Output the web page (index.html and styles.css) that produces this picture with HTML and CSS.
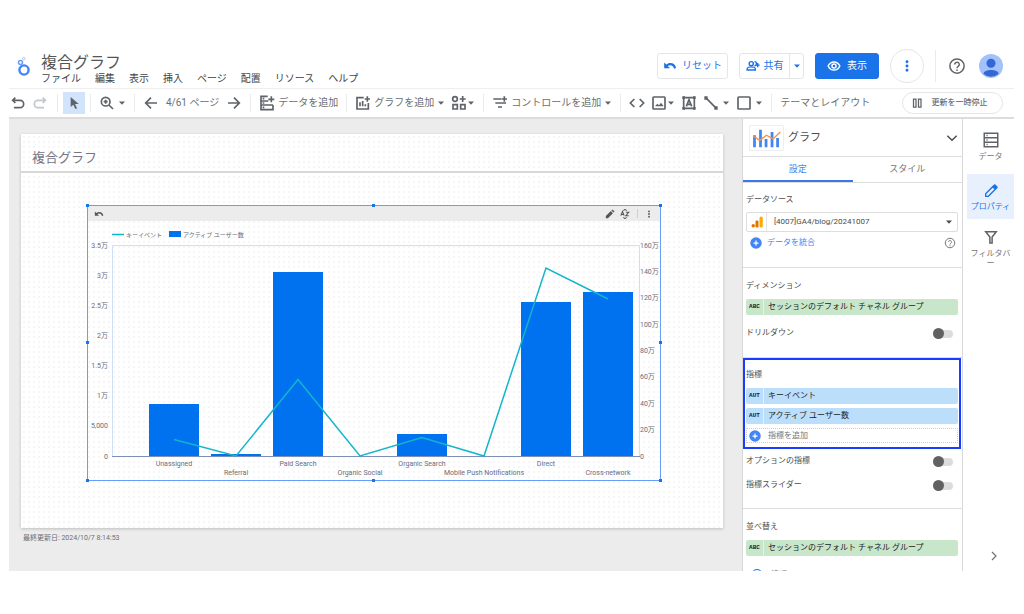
FILE: index.html
```html
<!DOCTYPE html>
<html lang="ja">
<head>
<meta charset="utf-8">
<title>複合グラフ</title>
<link rel="stylesheet" href="styles.css">
</head>
<body>
<svg class="defs" aria-hidden="true">
  <symbol id="undo" viewBox="0 0 24 24"><path d="M8 4 4 8l4 4M4 8h11a5 5 0 0 1 0 11H6"/></symbol>
  <symbol id="caret" viewBox="0 0 8 8"><path class="solid" d="M1 2.500h6L4 5.800z"/></symbol>
  <symbol id="back" viewBox="0 0 24 24"><path class="solid" d="M12.500 7c-2.600 0-5 1-6.900 2.600L2 6v10h10l-3.900-3.900A7 7 0 0 1 19.100 16.500l3.300-1.100A10.500 10.500 0 0 0 12.500 7z"/></symbol>
  <symbol id="help" viewBox="0 0 24 24"><circle cx="12" cy="12" r="9.500"/><path d="M9 10a3 3 0 1 1 4.800 2.300C12.600 13.200 12 13.700 12 15M12 16.500v2"/></symbol>
  <symbol id="dots" viewBox="0 0 24 24"><path class="solid" d="M12 3.500a2.200 2.200 0 1 0 0 4.400 2.200 2.200 0 0 0 0-4.400zm0 6.300a2.200 2.200 0 1 0 0 4.400 2.200 2.200 0 0 0 0-4.400zm0 6.300a2.200 2.200 0 1 0 0 4.400 2.200 2.200 0 0 0 0-4.400z"/></symbol>
  <symbol id="plus" viewBox="0 0 24 24"><circle class="solid" cx="12" cy="12" r="11.500"/><path class="cross" d="M12 7v10M7 12h10"/></symbol>
</svg>
<div class="app">
  <header class="header">
    <svg class="logo" viewBox="0 0 14 20"><circle cx="8" cy="14" r="4.600" fill="none" stroke="#4285f4" stroke-width="2.400"/><circle cx="4.500" cy="6.500" r="2" fill="none" stroke="#669df6" stroke-width="1.500"/><circle cx="7.800" cy="2.600" r="1.300" fill="none" stroke="#aecbfa" stroke-width="1"/></svg>
    <div class="titles">
      <h1 class="doc-title">複合グラフ</h1>
      <nav class="menu">
        <button>ファイル</button><button>編集</button><button>表示</button><button>挿入</button><button>ページ</button><button>配置</button><button>リソース</button><button>ヘルプ</button>
      </nav>
    </div>
    <div class="actions">
      <button class="outlined"><svg class="icon i14"><use href="#back"/></svg>リセット</button>
      <div class="split">
        <button class="split-main"><svg class="icon i14" viewBox="0 0 24 24"><circle cx="9" cy="8" r="3.500"/><path d="M2 19v-2c0-2 4-3.500 7-3.500s7 1.500 7 3.500v2zM14.500 4.500a3.500 3.500 0 0 1 0 7M20 7v7M16.500 10.500h7"/></svg>共有</button>
        <button class="split-caret" aria-label="共有オプション"><svg class="icon i8"><use href="#caret"/></svg></button>
      </div>
      <button class="primary"><svg class="icon i14" viewBox="0 0 24 24"><path d="M2 12c2-4.500 6-7 10-7s8 2.500 10 7c-2 4.500-6 7-10 7s-8-2.500-10-7z"/><circle cx="12" cy="12" r="3.500"/></svg>表示</button>
      <button class="more" aria-label="その他"><svg class="icon i16"><use href="#dots"/></svg></button>
      <span class="divider"></span>
      <button class="plain" aria-label="ヘルプ"><svg class="icon help"><use href="#help"/></svg></button>
      <svg class="avatar" viewBox="0 0 24 24"><circle cx="12" cy="12" r="12" fill="#a1c2fa"/><circle cx="12" cy="9.300" r="4.500" fill="#3367d6"/><path d="M4.500 20c0-3 4-4 7.500-4s7.500 1 7.500 4a12 12 0 0 1-15 0z" fill="#3367d6"/></svg>
    </div>
  </header>

  <div class="toolbar">
    <div class="group first">
      <button class="tool" aria-label="元に戻す"><svg class="icon i16"><use href="#undo"/></svg></button>
      <button class="tool faded" aria-label="やり直す"><svg class="icon i16" viewBox="0 0 24 24"><path d="m16 4 4 4-4 4M20 8H9a5 5 0 0 0 0 11h9"/></svg></button>
    </div>
    <div class="group tight">
      <button class="tool selected" aria-label="選択"><svg class="icon i16" viewBox="0 0 24 24"><path class="solid" d="M7 3v15l4-3.500 3 6.500 2.500-1.200-3-6.300H19z"/></svg></button>
    </div>
    <div class="group">
      <button class="tool" aria-label="ズーム"><svg class="icon i16" viewBox="0 0 24 24"><circle cx="10" cy="10" r="6.500"/><path d="m15 15 6 6M10 7v6M7 10h6"/></svg><svg class="icon i8"><use href="#caret"/></svg></button>
    </div>
    <div class="group pager">
      <button class="tool" aria-label="前のページ"><svg class="icon i16" viewBox="0 0 24 24"><path d="M21 12H4M12 4l-8 8 8 8"/></svg></button>
      <span>4/61 ページ</span>
      <button class="tool" aria-label="次のページ"><svg class="icon i16" viewBox="0 0 24 24"><path d="M3 12h17M12 4l8 8-8 8"/></svg></button>
    </div>
    <div class="group">
      <button class="tool"><svg class="icon i16" viewBox="0 0 24 24"><path d="M13 2H3v20h18v-7M3 9h11M3 15h18M18.500 2v9M14 6.500h9M5.500 5.500H8M5.500 12H8M5.500 18.500H8"/></svg>データを追加</button>
    </div>
    <div class="group">
      <button class="tool"><svg class="icon i16" viewBox="0 0 24 24"><path d="M13 4H3v17h17V12M7.500 17v-6M11.500 17V9M15.500 17v-3M18.500 2v8M14.500 6h8"/></svg>グラフを追加<svg class="icon i8"><use href="#caret"/></svg></button>
      <button class="tool snug" aria-label="コミュニティ ビジュアリゼーション"><svg class="icon i16" viewBox="0 0 24 24"><circle cx="6" cy="6" r="3.500"/><path d="M3 14.500h6.500v6.500H3zM14.500 14.500H21v6.500h-6.500zM17.500 1.500v9M13 6h9"/></svg><svg class="icon i8"><use href="#caret"/></svg></button>
    </div>
    <div class="group">
      <button class="tool"><svg class="icon i16" viewBox="0 0 24 24"><path d="M2 6h12M5 12h16M9 18h6M18.500 2v8M14.500 6h8"/></svg>コントロールを追加<svg class="icon i8"><use href="#caret"/></svg></button>
    </div>
    <div class="group">
      <button class="tool" aria-label="URL の埋め込み"><svg class="icon i16" viewBox="0 0 24 24"><path d="m8 6-6 6 6 6M16 6l6 6-6 6"/></svg></button>
      <button class="tool snug" aria-label="画像"><svg class="icon i16" viewBox="0 0 24 24"><rect x="3" y="3" width="18" height="18" rx="1"/><path class="solid" d="m6 17 3.500-4 2.500 2.500 3-4 4 5.500z"/></svg><svg class="icon i8"><use href="#caret"/></svg></button>
      <button class="tool" aria-label="テキスト"><svg class="icon i16" viewBox="0 0 24 24"><path d="M4 4h16v16H4zM8 17l4-10 4 10M9.500 14h5"/><path class="solid" d="M2 2h4v4H2zM18 2h4v4h-4zM2 18h4v4H2zM18 18h4v4h-4z"/></svg></button>
      <button class="tool" aria-label="線"><svg class="icon i16" viewBox="0 0 24 24"><path d="M4 4l16 16"/><path class="solid" d="M2 2h5v5H2zM17 17h5v5h-5z"/></svg><svg class="icon i8"><use href="#caret"/></svg></button>
      <button class="tool" aria-label="図形"><svg class="icon i16" viewBox="0 0 24 24"><rect x="3" y="3" width="18" height="18" rx="1"/></svg><svg class="icon i8"><use href="#caret"/></svg></button>
    </div>
    <div class="group">
      <button class="tool">テーマとレイアウト</button>
    </div>
    <button class="pause"><svg class="icon i12" viewBox="0 0 24 24"><path d="M3 4h5v16H3zM13 4h5v16h-5z"/></svg>更新を一時停止</button>
  </div>

  <main class="main">
    <section class="canvas">
      <div class="page">
        <h2 class="page-title">複合グラフ</h2>
        <div class="page-body">
          <div class="chart">
            <div class="chart-bar">
              <svg class="icon i10"><use href="#back"/></svg>
              <svg class="icon i10 push" viewBox="0 0 24 24"><path class="solid" d="M2 22v-5L14 5l5 5L7 22zM15.500 3.500 18 1l5 5-2.500 2.500z"/></svg>
              <svg class="icon i10" viewBox="0 0 24 24"><path d="M2 16 6 6l4 10M3.500 13h5M14 8h7l-7 8h7M8 4l4-3 4 3M8 20l4 3 4-3"/></svg>
              <span class="bar-divider"></span>
              <svg class="icon i10"><use href="#dots"/></svg>
            </div>
            <svg class="plot" viewBox="0 0 572 259" role="img" aria-label="キーイベントとアクティブ ユーザー数">
              <path d="M24 13.500h12" class="series"/><text x="38" y="16" class="legend">キーイベント</text>
              <rect x="81" y="10" width="12" height="6" class="bar"/><text x="95" y="16" class="legend">アクティブ ユーザー数</text>
              <path d="M24.500 235V24.500H551.500V235" class="frame"/>
              <g class="bar">
                <rect x="61" y="183" width="50" height="52"/><rect x="123" y="233" width="50" height="2"/><rect x="185" y="51" width="50" height="184"/><rect x="309" y="213" width="50" height="22"/><rect x="433" y="81" width="50" height="154"/><rect x="495" y="71" width="50" height="164"/>
              </g>
              <path d="M24 235.500H552" class="axis"/>
              <polyline class="series" points="86,218.500 148,235 210,158.500 272,235 334,216.500 396,235 458,47 520,78"/>
              <g class="end">
                <text x="20" y="27">3.5万</text><text x="20" y="57">3万</text><text x="20" y="87">2.5万</text><text x="20" y="117">2万</text><text x="20" y="147">1.5万</text><text x="20" y="177">1万</text><text x="20" y="207">5,000</text><text x="20" y="238">0</text>
              </g>
              <g>
                <text x="552" y="27">160万</text><text x="552" y="53">140万</text><text x="552" y="79">120万</text><text x="552" y="106">100万</text><text x="552" y="132">80万</text><text x="552" y="158">60万</text><text x="552" y="185">40万</text><text x="552" y="211">20万</text><text x="552" y="238">0</text>
              </g>
              <g class="mid">
                <text x="86" y="245">Unassigned</text><text x="148" y="254">Referral</text><text x="210" y="245">Paid Search</text><text x="272" y="254">Organic Social</text><text x="334" y="245">Organic Search</text><text x="396" y="254">Mobile Push Notifications</text><text x="458" y="245">Direct</text><text x="520" y="254">Cross-network</text>
              </g>
            </svg>
            <i class="handle t l"></i><i class="handle t c"></i><i class="handle t r"></i><i class="handle m l"></i><i class="handle m r"></i><i class="handle b l"></i><i class="handle b c"></i><i class="handle b r"></i>
          </div>
        </div>
      </div>
      <p class="updated">最終更新日: 2024/10/7 8:14:53</p>
    </section>

    <aside class="panel">
      <div class="panel-head">
        <svg class="chart-type" viewBox="0 0 35 26"><path d="M4.500 23V10M11 23V4M17 23V14M23.500 23V6.500M29.500 23V13" stroke="#4285f4" stroke-width="3" fill="none"/><path d="M3 10.500l7 5 7.500-5.500 7 4 8-7.500" stroke="#f4924a" stroke-width="1.500" fill="none"/></svg>
        <h2>グラフ</h2>
        <svg class="icon i14 push" viewBox="0 0 24 24"><path d="m4 8 8 8 8-8"/></svg>
      </div>
      <div class="tabs" role="tablist"><button role="tab" aria-selected="true" class="tab active">設定</button><button role="tab" aria-selected="false" class="tab">スタイル</button></div>
      <section class="section source">
        <h3>データソース</h3>
        <button class="datasource"><span class="ga"><svg viewBox="0 0 24 24"><circle cx="4.500" cy="19.500" r="3.500" fill="#e37400"/><rect x="9" y="9" width="6" height="14" rx="2" fill="#e37400"/><rect x="17" y="1" width="6.500" height="22" rx="3" fill="#f9ab00"/></svg></span><span class="source-name">[4007]GA4/blog/20241007</span><svg class="icon i8"><use href="#caret"/></svg></button>
        <div class="blend"><button class="add-link"><svg class="icon i12"><use href="#plus"/></svg>データを統合</button><svg class="icon i12 push"><use href="#help"/></svg></div>
      </section>
      <section class="section dimension">
        <h3>ディメンション</h3>
        <div class="chip green"><b>ABC</b><span>セッションのデフォルト チャネル グループ</span></div>
        <label class="switch-row">ドリルダウン<input type="checkbox" class="switch"></label>
      </section>
      <section class="metrics">
        <h3>指標</h3>
        <div class="chip blue"><b>AUT</b><span>キーイベント</span></div>
        <div class="chip blue"><b>AUT</b><span>アクティブ ユーザー数</span></div>
        <button class="add-metric"><svg class="icon i12"><use href="#plus"/></svg>指標を追加</button>
      </section>
      <section class="section options">
        <label class="switch-row">オプションの指標<input type="checkbox" class="switch"></label>
        <label class="switch-row">指標スライダー<input type="checkbox" class="switch"></label>
      </section>
      <section class="section sort">
        <h3>並べ替え</h3>
        <div class="chip green"><b>ABC</b><span>セッションのデフォルト チャネル グループ</span></div>
        <label class="radio-row"><input type="radio" name="order" checked>降順</label>
      </section>
    </aside>

    <nav class="rail">
      <button class="rail-item"><svg class="icon i20" viewBox="0 0 24 24"><path d="M3 3h18v18H3zM3 9h18M3 15h18M6 6h1.500M6 12h1.500M6 18h1.500"/></svg>データ</button>
      <button class="rail-item current"><svg class="icon i16" viewBox="0 0 24 24"><path d="M4 20v-4L14.500 5.500l4 4L8 20z"/><path class="solid" d="m14 5 3-3c1-1 6 4 5 5l-3 3z"/></svg>プロパティ</button>
      <button class="rail-item"><svg class="icon i20" viewBox="0 0 24 24"><path d="M5 5h14l-5.500 7v8h-3v-8z"/></svg>フィルタバー</button>
      <button class="rail-toggle" aria-label="閉じる"><svg class="icon i12" viewBox="0 0 24 24"><path d="m8 4 8 8-8 8"/></svg></button>
    </nav>
  </main>
</div>
</body>
</html>
```
FILE: styles.css
```css
* { box-sizing: border-box; }
body {
  margin: 0;
  background: #fff;
  color: #6b6f74;
  font: 10px/14px Roboto, "Noto Sans CJK JP", sans-serif;
}
h1, h2, h3, p { margin: 0; font-weight: 400; }
h3 { font-size: 8px; }
button { margin: 0; padding: 0; border: 0; background: none; color: inherit; font: inherit; white-space: nowrap; }
.defs { display: none; }
.app { display: flex; flex-direction: column; height: 100vh; padding: 48px 10px 43px 9px; }

.icon { flex: none; fill: none; stroke: currentColor; stroke-width: 2.500; }
.solid { fill: currentColor; stroke: none; }
.cross { stroke: #fff; }
.i8 { width: 8px; height: 8px; }
.i10 { width: 10px; height: 10px; }
.i12 { width: 12px; height: 12px; }
.i14 { width: 14px; height: 14px; }
.i16 { width: 16px; height: 16px; }
.i20 { width: 18px; height: 18px; margin: 1px; }
.help { width: 18px; height: 18px; stroke-width: 2; }
.push { margin-left: auto; }

/* Header */
.header { display: flex; flex: none; align-items: center; height: 41px; padding: 0 11px 4px 7px; border-bottom: 1px solid #eee; }
.logo { width: 14px; height: 20px; margin-right: 11px; }
.titles { padding-top: 8px; }
.doc-title { font-size: 16px; line-height: 18px; color: #555; }
.menu { display: flex; gap: 14px; color: #444; }
.actions { display: flex; align-items: center; gap: 11px; margin-left: auto; color: #1a73e8; }
.outlined, .split, .primary { display: flex; align-items: center; justify-content: center; height: 26px; border: 1px solid #e4e6e9; border-radius: 3px; }
.outlined { gap: 5px; width: 71px; }
.split-main { display: flex; align-items: center; justify-content: center; gap: 4px; width: 49px; height: 24px; }
.split-caret { display: flex; align-items: center; justify-content: center; width: 14px; height: 24px; border-left: 1px solid #e4e6e9; }
.primary { gap: 6px; width: 64px; border-color: #1a73e8; background: #1a73e8; color: #fff; }
.more { display: flex; align-items: center; justify-content: center; width: 34px; height: 34px; border: 1px solid #e4e6e9; border-radius: 50%; }
.divider { width: 1px; height: 32px; background: #e8eaed; }
.plain { display: flex; margin: 0 2px 0 1px; color: #5f6368; }
.avatar { width: 24px; height: 24px; }

/* Toolbar */
.toolbar { display: flex; flex: none; align-items: center; height: 30px; padding: 0 11px 0 0; border-bottom: 2px solid #dcdcdc; }
.toolbar .icon { color: #5f6368; }
.toolbar .faded .icon { color: #c4c7ca; }
.group { display: flex; align-items: center; gap: 6px; height: 18px; padding: 0 8px; border-left: 1px solid #e8eaed; white-space: nowrap; }
.group.first { padding: 0 9px 0 1px; border: 0; }
.group.tight { padding: 0 5px; }
.group.pager { gap: 7px; }
.tool { display: flex; align-items: center; gap: 3px; }
.tool.snug { gap: 0; }
.selected { justify-content: center; width: 22px; height: 22px; background: #d2e3fc; }
.pause { display: flex; align-items: center; justify-content: center; gap: 8px; width: 101px; height: 22px; margin-left: auto; padding-right: 6px; border: 1px solid #e4e6e9; border-radius: 11px; font-size: 8px; font-weight: 500; }

/* Canvas */
.main { display: grid; flex: 1; grid-template-columns: minmax(0, 1fr) 221px 51px; min-height: 0; }
.canvas { padding: 15px 19px 0 12px; background: #ececec; overflow: hidden; }
.page { background: #fff radial-gradient(circle at 3px 3px, #f6f6f6 1px, transparent 1px) 0 0 / 5px 5px; box-shadow: 0 1px 3px #0003; }
.page-title { padding: 16px 11px 6px; border-bottom: 2px solid #d8d8d8; font-size: 13px; line-height: 15px; color: #757583; }
.page-body { padding: 32px 62px 47px 66px; }
.chart { position: relative; border: 1px solid #669df6; }
.chart-bar { display: flex; align-items: center; gap: 5px; height: 15px; padding: 0 6px; background: #ececec; color: #555; }
.bar-divider { width: 1px; height: 9px; margin: 0 1px 0 2px; background: #d0d0d0; }
.plot { display: block; width: 100%; font-size: 7px; fill: #6b6b7b; }
.legend { font-size: 6px; }
.series { fill: none; stroke: #12b5cb; stroke-width: 1.500; }
.bar { fill: #0072f0; }
.frame { fill: none; stroke: #cfdffa; }
.axis { stroke: #7e8fb8; }
.end { text-anchor: end; }
.mid { text-anchor: middle; }
.handle { position: absolute; width: 3px; height: 3px; background: #1a73e8; }
.t { top: -2px; }
.m { top: calc(50% - 2px); }
.b { bottom: -2px; }
.l { left: -2px; }
.c { left: calc(50% - 2px); }
.r { right: -2px; }
.updated { padding: 4px 2px; font-size: 7px; line-height: 13px; }

/* Properties panel */
.panel { border: solid #d8d8d8; border-width: 0 1px; overflow: hidden; font-size: 8px; line-height: 12px; color: #4c4c4c; }
.panel-head { display: flex; align-items: center; gap: 4px; height: 38px; padding: 0 3px 0 6px; border-bottom: 1px solid #ddd; }
.panel-head h2 { font-size: 11px; line-height: 16px; }
.chart-type { width: 35px; height: 26px; border: 1px solid #eee; border-radius: 2px; }
.tabs { display: flex; height: 26px; border-bottom: 1px solid #ddd; }
.tab { flex: 1; font-size: 9px; color: #757575; border-bottom: 2px solid transparent; }
.tab.active { border-color: #3b78e7; color: #4285f4; }
.section { padding: 0 4px 0 3px; }
.source, .dimension, .options { border-bottom: 1px solid #ddd; }
.source { padding-top: 11px; padding-bottom: 18px; }
.datasource { display: flex; align-items: center; width: 100%; height: 20px; margin-top: 6px; padding-right: 4px; border: 1px solid #ddd; border-radius: 2px; }
.ga { display: flex; align-items: center; justify-content: center; width: 20px; height: 18px; border-right: 1px solid #e4e4e4; }
.ga svg { width: 12px; height: 12px; }
.source-name { flex: 1; padding-left: 7px; text-align: left; }
.blend { display: flex; align-items: center; height: 12px; margin-top: 5px; padding: 0 2px 0 4px; color: #777; }
.blend .push { stroke-width: 2; }
.add-link { display: flex; align-items: center; gap: 5px; color: #4285f4; }
.dimension { padding-top: 12px; padding-bottom: 18px; }
.chip { display: flex; align-items: center; height: 16px; border-radius: 2px; color: #222; white-space: nowrap; }
.chip b { width: 18px; font: 700 6px/16px "Liberation Mono", monospace; text-align: center; border-right: 1px solid #fff8; }
.chip span { padding-left: 4px; }
.green { background: #c8e6c9; }
.blue { background: #bbdefb; }
.dimension .chip { margin-top: 7px; }
.switch-row { display: flex; align-items: center; justify-content: space-between; height: 12px; padding-right: 5px; }
.dimension .switch-row { margin-top: 12px; }
.switch { position: relative; width: 20px; height: 11px; margin: 0; appearance: none; }
.switch::before { content: ""; display: block; width: 14px; height: 8px; margin: 2px 0 0 6px; border-radius: 4px; background: #dcdcdc; }
.switch::after { content: ""; position: absolute; top: 0; left: 0; width: 11px; height: 11px; border-radius: 50%; background: #616161; }
.metrics { display: flex; flex-direction: column; gap: 4px; margin-right: 1px; padding: 9px 1px 4px; border: 2px solid #1a3cff; }
.metrics h3 { margin-bottom: 3px; }
.add-metric { display: flex; align-items: center; gap: 7px; height: 15px; padding-left: 2px; border: 1px dotted #ccc; color: #757575; }
.add-metric .icon, .add-link .icon { color: #4285f4; }
.options { display: flex; flex-direction: column; gap: 12px; padding-top: 6px; padding-bottom: 17px; }
.sort { padding-top: 12px; }
.sort .chip { margin-top: 7px; }
.radio-row { display: flex; align-items: center; gap: 8px; margin-top: 13px; padding-left: 5px; color: #777; }
.radio-row input { width: 12px; height: 12px; margin: 0; }

/* Rail */
.rail { display: flex; flex-direction: column; padding: 7px 0 6px 4px; font-size: 8px; line-height: 10px; color: #757575; }
.rail-item { display: flex; flex-direction: column; align-items: center; gap: 2px; padding: 4px 3px 7px; white-space: normal; word-break: break-all; }
.rail-item .icon { stroke-width: 2; color: #5f6368; }
.rail-item.current { gap: 3px; margin: 5px 0 4px; padding: 9px 0 7px; background: #e8f0fe; color: #1a73e8; }
.rail-item.current .icon { color: #1a73e8; }
.rail-toggle { margin: auto 14px 0 auto; }
```
